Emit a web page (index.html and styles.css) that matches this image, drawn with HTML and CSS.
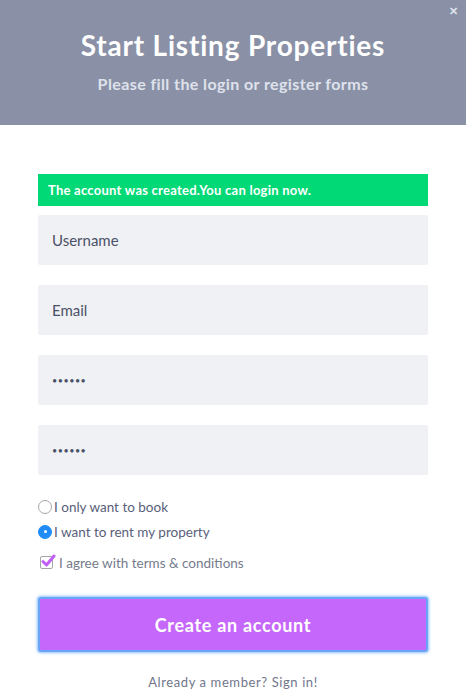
FILE: index.html
```html
<!DOCTYPE html>
<html>
<head>
<meta charset="utf-8">
<link rel="stylesheet" href="styles.css">
</head>
<body>
<div class="modal">
  <header class="head">
    <span class="close">&#x2715;</span>
    <h1 class="title">Start Listing Properties</h1>
    <p class="subtitle">Please fill the login or register forms</p>
  </header>
  <form class="form">
    <div class="alert">The account was created.You can login now.</div>
    <div class="field">Username</div>
    <div class="field">Email</div>
    <div class="field dots">&#8226;&#8226;&#8226;&#8226;&#8226;&#8226;</div>
    <div class="field dots">&#8226;&#8226;&#8226;&#8226;&#8226;&#8226;</div>
    <div class="options">
      <label class="opt"><span class="radio"></span>I only want to book</label>
      <label class="opt"><span class="radio on"></span>I want to rent my property</label>
      <label class="opt check-row"><span class="check"><svg width="16" height="14" viewBox="0 0 16 14"><path d="M3 7.5 L6.5 11 L14 2" fill="none" stroke="#c05ef5" stroke-width="3" stroke-linecap="round" stroke-linejoin="round"/></svg></span>I agree with terms &amp; conditions</label>
    </div>
    <button type="button" class="btn">Create an account</button>
    <p class="foot">Already a member? Sign in!</p>
  </form>
</div>
</body>
</html>
```
FILE: styles.css
```css
* { box-sizing: border-box; }
html, body { margin: 0; padding: 0; background: #fff; }
body { font-family: "Lato", "Open Sans", sans-serif; }
.modal { width: 466px; }
.head {
  position: relative;
  background: #8a91a6;
  height: 125px;
  display: flex;
  flex-direction: column;
  align-items: center;
  padding-top: 28px;
}
.close {
  position: absolute;
  right: 8px;
  top: 4px;
  color: #dfe3ec;
  font-size: 11px;
  font-weight: 700;
}
.title {
  margin: 0;
  color: #fff;
  font-size: 28px;
  font-weight: 700;
  line-height: 34px;
  letter-spacing: 0.8px;
}
.subtitle {
  margin: 12px 0 0;
  color: #dfe2ec;
  font-size: 16px;
  font-weight: 700;
  line-height: 20px;
  letter-spacing: 0.4px;
}
.form {
  padding: 49px 38px 0;
  display: flex;
  flex-direction: column;
}
.alert {
  background: #00d976;
  color: #fff;
  font-size: 13px;
  font-weight: 700;
  height: 32px;
  line-height: 32px;
  padding-left: 10px;
  letter-spacing: 0.25px;
}
.field {
  margin-top: 9px;
  height: 50px;
  background: #f0f1f5;
  border-radius: 2px;
  padding-left: 14px;
  display: flex;
  align-items: center;
  color: #4b5167;
  font-size: 15px;
}
.field + .field { margin-top: 20px; }
.dots { font-size: 9px; letter-spacing: 0.5px; padding-top: 1px; }
.options {
  margin-top: 19px;
  display: flex;
  flex-direction: column;
}
.opt {
  display: flex;
  align-items: center;
  color: #59607a;
  font-size: 13.5px;
  height: 25px;
  gap: 2px;
}
.radio {
  width: 14px;
  height: 14px;
  border-radius: 50%;
  border: 1px solid #a6a6a6;
  background: #fff;
  position: relative;
}
.radio.on { background: #1f8cf7; border-color: #1f8cf7; }
.radio.on::after {
  content: "";
  position: absolute;
  left: 4.5px; top: 4.5px;
  width: 3px; height: 3px;
  border-radius: 50%;
  background: #fff;
}
.check-row { margin-top: 6px; color: #767b8c; gap: 6px; }
.check {
  width: 13px;
  height: 13px;
  border: 1px solid #a6a6a6;
  border-radius: 2px;
  background: #fff;
  position: relative;
  margin-left: 2px;
}
.check svg { position: absolute; left: -1px; top: -3px; }
.btn {
  margin-top: 22px;
  height: 55px;
  width: 100%;
  background: #c667fb;
  border: 2px solid #6aa6f5;
  box-shadow: 0 0 3px 1px #8fc0ff;
  border-radius: 3px;
  color: #fff;
  font-family: inherit;
  font-size: 18px;
  font-weight: 700;
  letter-spacing: 0.7px;
}
.foot {
  margin: 22px 0 0;
  text-align: center;
  color: #71768a;
  font-size: 13px;
  letter-spacing: 0.6px;
}
```
